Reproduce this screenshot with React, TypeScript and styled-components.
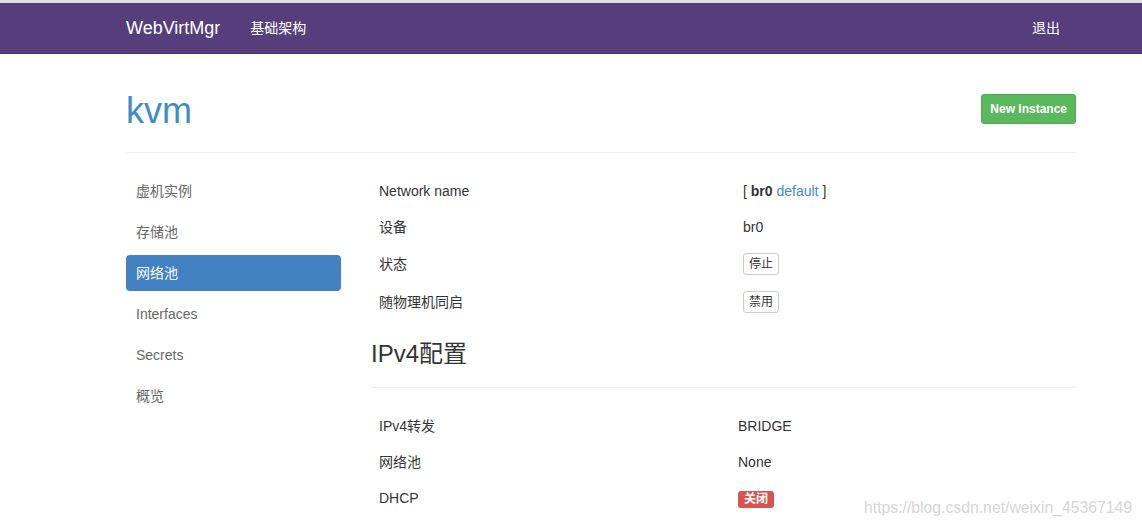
import React from 'react';
import styled, { createGlobalStyle } from 'styled-components';

const GlobalStyle = createGlobalStyle`
  html, body {
    margin: 0;
    padding: 0;
    background: #fff;
    overflow: hidden;
  }
  body {
    font-family: "Liberation Sans", Arial, "Noto Sans CJK SC", sans-serif;
    font-size: 14px;
    line-height: 20px;
    color: #333;
  }
  * { box-sizing: border-box; }
`;

const Page = styled.div`
  position: relative;
  height: 526px;
  overflow: hidden;
`;

const Navbar = styled.header`
  background: #563d7c;
  border-top: 3px solid #dedede;
  border-bottom: 1px solid #463168;
  height: 54px;
`;

const Container = styled.div`
  width: 950px;
  margin-left: 126px;
`;

const NavInner = styled(Container)`
  display: flex;
  align-items: center;
  height: 50px;
`;

const Brand = styled.a`
  color: #fff;
  font-size: 18px;
  text-decoration: none;
  margin-right: 30px;
`;

const NavLink = styled.a<{ $right?: boolean }>`
  color: #fff;
  font-size: 14px;
  text-decoration: none;
  margin-left: ${p => (p.$right ? 'auto' : '0')};
  margin-right: ${p => (p.$right ? '16px' : '0')};
`;

const PageHeader = styled.div`
  display: flex;
  justify-content: space-between;
  align-items: flex-start;
  padding-top: 37px;
  padding-bottom: 21px;
  border-bottom: 1px solid #eee;
`;

const Title = styled.h1`
  margin: 0;
  font-size: 36px;
  line-height: 40px;
  font-weight: 400;
  color: #428bca;
`;

const Button = styled.button<{ $variant?: 'success' | 'default' }>`
  font-family: inherit;
  cursor: pointer;
  border-radius: 3px;
  font-size: 12px;
  ${p =>
    p.$variant === 'success'
      ? `
    margin-top: 3px;
    background: #5cb85c;
    border: 1px solid #4cae4c;
    color: #fff;
    font-weight: 700;
    height: 30px;
    padding: 0 8px;
    line-height: 28px;
  `
      : `
    background: #fff;
    border: 1px solid #ccc;
    color: #333;
    height: 22px;
    padding: 0 5px;
    line-height: 20px;
  `}
`;

const Body = styled.div`
  display: flex;
  gap: 30px;
  padding-top: 20px;
`;

const SideNav = styled.ul`
  list-style: none;
  margin: 0;
  padding: 0;
  width: 215px;
  flex-shrink: 0;
  display: flex;
  flex-direction: column;
  gap: 5px;
`;

const Pill = styled.li<{ $active?: boolean }>`
  padding: 8px 10px;
  line-height: 20px;
  border-radius: 4px;
  color: ${p => (p.$active ? '#fff' : '#666')};
  background: ${p => (p.$active ? '#4282c3' : 'transparent')};
`;

const Main = styled.div`
  flex: 1;
`;

const Table = styled.table<{ $top?: number }>`
  width: 100%;
  border-collapse: collapse;
  margin-top: ${p => p.$top ?? 0}px;
  td {
    padding: 8px;
    line-height: 20px;
    vertical-align: middle;
  }
`;

const LabelCell = styled.td<{ $w: number }>`
  width: ${p => p.$w}px;
`;

const SectionTitle = styled.h3`
  margin: 20px 0 0;
  font-size: 24px;
  line-height: 26px;
  font-weight: 400;
  padding-bottom: 20px;
  border-bottom: 1px solid #eee;
`;

const LinkText = styled.a`
  color: #428bca;
  text-decoration: none;
`;

const Badge = styled.span`
  display: inline-block;
  background: #d9534f;
  color: #fff;
  font-size: 12px;
  font-weight: 700;
  line-height: 13px;
  padding: 2px 6px;
  border-radius: 3px;
`;

const Watermark = styled.div`
  position: absolute;
  right: 10px;
  bottom: 8px;
  font-size: 15.75px;
  color: #d6d6d6;
`;

const sideItems = ['虚机实例', '存储池', '网络池', 'Interfaces', 'Secrets', '概览'];

const App: React.FC = () => {
  return (
    <Page>
      <GlobalStyle />
      <Navbar>
        <NavInner>
          <Brand href="#">WebVirtMgr</Brand>
          <NavLink href="#">基础架构</NavLink>
          <NavLink href="#" $right>退出</NavLink>
        </NavInner>
      </Navbar>
      <Container>
        <PageHeader>
          <Title>kvm</Title>
          <Button $variant="success">New Instance</Button>
        </PageHeader>
        <Body>
          <SideNav>
            {sideItems.map(item => (
              <Pill key={item} $active={item === '网络池'}>{item}</Pill>
            ))}
          </SideNav>
          <Main>
            <Table>
              <tbody>
                <tr>
                  <LabelCell $w={364}>Network name</LabelCell>
                  <td>[ <b>br0</b> <LinkText href="#">default</LinkText> ]</td>
                </tr>
                <tr>
                  <LabelCell $w={364}>设备</LabelCell>
                  <td>br0</td>
                </tr>
                <tr>
                  <LabelCell $w={364}>状态</LabelCell>
                  <td><Button>停止</Button></td>
                </tr>
                <tr>
                  <LabelCell $w={364}>随物理机同启</LabelCell>
                  <td><Button>禁用</Button></td>
                </tr>
              </tbody>
            </Table>
            <SectionTitle>IPv4配置</SectionTitle>
            <Table $top={20}>
              <tbody>
                <tr>
                  <LabelCell $w={359}>IPv4转发</LabelCell>
                  <td>BRIDGE</td>
                </tr>
                <tr>
                  <LabelCell $w={359}>网络池</LabelCell>
                  <td>None</td>
                </tr>
                <tr>
                  <LabelCell $w={359}>DHCP</LabelCell>
                  <td><Badge>关闭</Badge></td>
                </tr>
              </tbody>
            </Table>
          </Main>
        </Body>
      </Container>
      <Watermark>https://blog.csdn.net/weixin_45367149</Watermark>
    </Page>
  );
};

export default App;
